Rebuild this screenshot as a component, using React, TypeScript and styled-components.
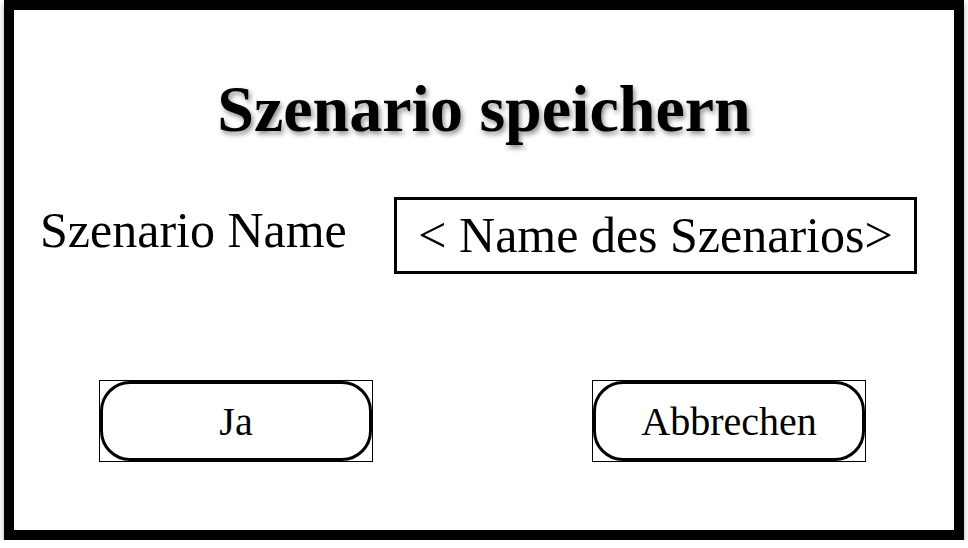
import styled, { createGlobalStyle } from "styled-components";

const GlobalStyle = createGlobalStyle`
  html, body {
    margin: 0;
    padding: 0;
    background: #ffffff;
  }
  body {
    font-family: "Liberation Serif", "Times New Roman", serif;
    color: #000000;
  }
`;

const Frame = styled.div`
  box-sizing: border-box;
  width: 960px;
  height: 540px;
  margin-left: 4px;
  border: 10px solid #000000;
  background: #ffffff;
  box-shadow: 0 3px 6px rgba(0, 0, 0, 0.3);
  display: flex;
  flex-direction: column;
  align-items: stretch;
  padding-top: 66px;
`;

const Title = styled.h1`
  margin: 0;
  font-size: 66px;
  line-height: 1;
  font-weight: bold;
  text-align: center;
  text-shadow: 2px 3px 5px rgba(0, 0, 0, 0.45);
`;

const NameRow = styled.div`
  display: flex;
  align-items: flex-start;
  justify-content: space-between;
  margin-top: 55px;
  padding: 0 37px 0 26px;
`;

const Label = styled.span`
  margin-top: 8px;
  font-size: 50px;
  line-height: 1;
`;

const NameField = styled.div`
  box-sizing: border-box;
  width: 523px;
  height: 77px;
  border: 3px solid #000000;
  font-size: 50px;
  line-height: 71px;
  text-align: center;
  white-space: nowrap;
`;

const ButtonRow = styled.div`
  display: flex;
  justify-content: space-between;
  margin-top: 106px;
  padding: 0 88px 0 85px;
`;

const ButtonOutline = styled.div`
  box-sizing: border-box;
  width: 274px;
  height: 82px;
  border: 1px solid #000000;
`;

const Button = styled.button<{ $size: number }>`
  box-sizing: border-box;
  width: 100%;
  height: 100%;
  border: 3px solid #000000;
  border-radius: 30px;
  background: #ffffff;
  font-family: "Liberation Serif", "Times New Roman", serif;
  font-size: ${(p) => p.$size}px;
  color: #000000;
  padding: 0;
  cursor: pointer;
`;

export default function App() {
  return (
    <>
      <GlobalStyle />
      <Frame>
        <Title>Szenario speichern</Title>
        <NameRow>
          <Label>Szenario Name</Label>
          <NameField>&lt; Name des Szenarios&gt;</NameField>
        </NameRow>
        <ButtonRow>
          <ButtonOutline>
            <Button $size={40}>Ja</Button>
          </ButtonOutline>
          <ButtonOutline>
            <Button $size={40}>Abbrechen</Button>
          </ButtonOutline>
        </ButtonRow>
      </Frame>
    </>
  );
}
